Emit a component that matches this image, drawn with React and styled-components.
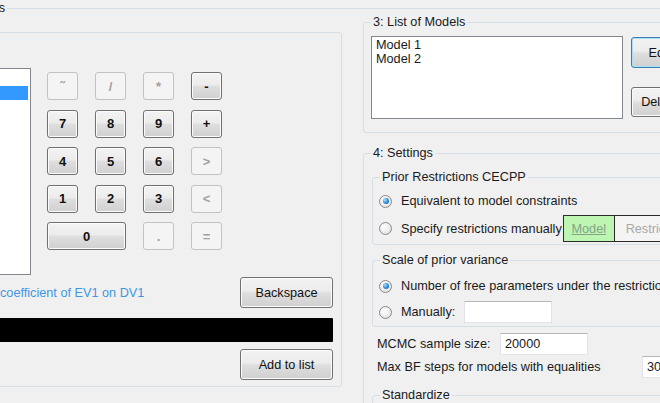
import styled, { createGlobalStyle } from "styled-components";

const GlobalStyle = createGlobalStyle`
  html, body {
    margin: 0;
    padding: 0;
    background: #f0f0f0;
  }
  body {
    font-family: "Liberation Sans", Arial, sans-serif;
  }
`;

const Screen = styled.div`
  width: 660px;
  height: 403px;
  overflow: hidden;
  background: #f0f0f0;
  font-family: "Liberation Sans", Arial, sans-serif;
  font-size: 12.7px;
  color: #1a1a1a;
  padding-top: 1px;
  box-sizing: border-box;
`;

const Group = styled.fieldset`
  margin: 0;
  padding: 0;
  min-width: 0;
  border: 1px solid #d5dfe5;
  border-radius: 3px;
`;

const Legend = styled.legend`
  margin-left: 7px;
  padding: 0 2px;
  line-height: 14px;
  font-size: 12.7px;
  color: #1a1a1a;
  white-space: nowrap;
`;

// title of the outer box; the window is cropped so only its tail shows
const FrameTitle = styled.span`
  display: inline-block;
  width: 105px;
  text-align: right;
`;

const Frame = styled(Group)`
  margin-left: -110px;
  width: 810px;
`;

const FrameBody = styled.div`
  display: flex;
  align-items: flex-start;
  gap: 21px;
  padding-left: 9px;
`;

/* ---------- left panel ---------- */

const Panel = styled.div`
  width: 442px;
  box-sizing: border-box;
  margin-top: 17px;
  border: 1px solid #d5dfe5;
  border-radius: 3px;
  padding: 35px 8px 6px 10px;
`;

const TopRow = styled.div`
  display: flex;
  align-items: flex-start;
`;

const ListBox = styled.div`
  width: ${(p) => p.$w}px;
  height: ${(p) => p.$h}px;
  box-sizing: border-box;
  flex: none;
  background: #fff;
  border: 1px solid #828790;
  padding: ${(p) => p.$pad || "3px 2px"};
  overflow: hidden;
`;

const Item = styled.div`
  height: 14px;
  line-height: 14px;
  white-space: nowrap;
  color: ${(p) => (p.$selected ? "#fff" : "#1a1a1a")};
  background: ${(p) => (p.$selected ? "#3399ff" : "transparent")};
`;

const Keypad = styled.div`
  display: grid;
  grid-template-columns: repeat(4, 31px);
  grid-auto-rows: 28px;
  column-gap: 17px;
  row-gap: 9.5px;
  margin: 4px 0 0 16px;
`;

const Btn = styled.button`
  font-family: inherit;
  font-size: 12.7px;
  color: #111;
  padding: 0;
  border: 1px solid #707070;
  border-radius: 3px;
  background: linear-gradient(#f3f3f3, #ececec 45%, #dedede 52%, #d0d0d0);
  box-shadow: inset 0 0 0 1px #fbfbfb;
  width: ${(p) => (p.$w ? `${p.$w}px` : "auto")};
  height: ${(p) => (p.$h ? `${p.$h}px` : "auto")};
  flex: none;
  &:disabled {
    border-color: #bfc3c6;
    background: #f4f4f4;
    color: #a0a0a0;
    box-shadow: none;
  }
`;

const Key = styled(Btn)`
  font-weight: 700;
  font-size: 13px;
  grid-column: span ${(p) => p.$span || 1};
`;

const DefaultBtn = styled(Btn)`
  border-color: #3c7fb1;
  box-shadow: inset 0 0 0 1px #a7e1f7;
`;

const HintRow = styled.div`
  display: flex;
  align-items: center;
  justify-content: space-between;
  margin-top: 2px;
`;

const Hint = styled.div`
  display: flex;
  white-space: nowrap;
  color: #3f97e3;
  padding-left: 89px;
`;

const FormulaBar = styled.div`
  height: 24px;
  margin-top: 10px;
  background: #000;
  border-radius: 1px;
`;

const AddRow = styled.div`
  display: flex;
  justify-content: flex-end;
  margin-top: 7px;
`;

/* ---------- right column ---------- */

const RightCol = styled.div`
  width: 330px;
  flex: none;
`;

const ListBody = styled.div`
  display: flex;
  gap: 8px;
  padding: 7px 0 13px 7px;
`;

const SideButtons = styled.div`
  display: flex;
  flex-direction: column;
  gap: 19px;
  padding-top: 1px;
`;

const Settings = styled(Group)`
  margin-top: 13px;
`;

const SettingsBody = styled.div`
  padding: 10px 0 0 8px;
`;

const SubGroup = styled(Group)`
  margin-top: ${(p) => p.$mt || 0}px;
`;

const SubBody = styled.div`
  padding: ${(p) => p.$pad};
`;

const RadioRow = styled.div`
  display: flex;
  align-items: center;
  white-space: nowrap;
  height: ${(p) => p.$h}px;
  margin-top: ${(p) => p.$mt || 0}px;
`;

const Radio = styled.span`
  width: 13px;
  height: 13px;
  box-sizing: border-box;
  flex: none;
  border-radius: 50%;
  border: 1px solid #8a8a8a;
  background: radial-gradient(circle at 40% 35%, #ffffff 0%, #ececec 55%, #d2d2d2 100%);
  display: flex;
  align-items: center;
  justify-content: center;
  margin-right: 9px;
  &::after {
    content: "";
    width: 6px;
    height: 6px;
    border-radius: 50%;
    background: ${(p) =>
      p.$on
        ? "radial-gradient(circle at 35% 35%, #a8e2ff 0%, #2a86d6 55%, #0c4f93 100%)"
        : "transparent"};
  }
`;

const ModelToggle = styled.div`
  display: flex;
  height: 27px;
  margin-left: 1px;
  border: 1px solid #2b2b2b;
  box-sizing: border-box;
`;

const ToggleSeg = styled.div`
  display: flex;
  align-items: center;
  justify-content: center;
  width: ${(p) => p.$w}px;
  background: ${(p) => (p.$active ? "#bdf5b3" : "#f4f4f4")};
  color: ${(p) => (p.$active ? "#86a386" : "#a8a8a8")};
  text-decoration: ${(p) => (p.$active ? "underline" : "none")};
  border-left: ${(p) => (p.$active ? "none" : "1px solid #2b2b2b")};
`;

const Label = styled.span`
  display: inline-block;
  width: ${(p) => p.$w}px;
  white-space: nowrap;
`;

const TextBox = styled.div`
  width: ${(p) => p.$w}px;
  height: 22px;
  box-sizing: border-box;
  background: #fff;
  border: 1px solid #e2e3ea;
  border-top-color: #b5b7bd;
  padding: 0 4px;
  line-height: 20px;
  flex: none;
`;

const FieldRow = styled.div`
  display: flex;
  align-items: center;
  height: 22px;
  margin: ${(p) => p.$mt}px 0 0 5px;
`;

const keys = [
  { k: "˜", off: true },
  { k: "/", off: true },
  { k: "*", off: true },
  { k: "-" },
  { k: "7" },
  { k: "8" },
  { k: "9" },
  { k: "+" },
  { k: "4" },
  { k: "5" },
  { k: "6" },
  { k: ">", off: true },
  { k: "1" },
  { k: "2" },
  { k: "3" },
  { k: "<", off: true },
  { k: "0", span: 2 },
  { k: ".", off: true },
  { k: "=", off: true },
];

export default function App() {
  return (
    <Screen>
      <GlobalStyle />
      <Frame>
        <Legend>
          <FrameTitle>2: Specify Models</FrameTitle>
        </Legend>
        <FrameBody>
          <Panel>
            <TopRow>
              <ListBox $w={120} $h={207}>
                <Item />
                <Item $selected />
              </ListBox>
              <Keypad>
                {keys.map((b, i) => (
                  <Key key={i} disabled={b.off} $span={b.span}>
                    {b.k}
                  </Key>
                ))}
              </Keypad>
            </TopRow>
            <HintRow>
              <Hint>coefficient of EV1 on DV1</Hint>
              <Btn $w={93} $h={31}>Backspace</Btn>
            </HintRow>
            <FormulaBar />
            <AddRow>
              <Btn $w={93} $h={31}>Add to list</Btn>
            </AddRow>
          </Panel>

          <RightCol>
            <Group>
              <Legend>3: List of Models</Legend>
              <ListBody>
                <ListBox $w={252} $h={83} $pad="1px 4px">
                  <Item>Model 1</Item>
                  <Item>Model 2</Item>
                </ListBox>
                <SideButtons>
                  <DefaultBtn $w={57} $h={31}>Edit</DefaultBtn>
                  <Btn $w={57} $h={30}>Delete</Btn>
                </SideButtons>
              </ListBody>
            </Group>

            <Settings>
              <Legend>4: Settings</Legend>
              <SettingsBody>
                <SubGroup>
                  <Legend>Prior Restrictions CECPP</Legend>
                  <SubBody $pad="7px 0 2px 6px">
                    <RadioRow $h={20}>
                      <Radio $on />
                      Equivalent to model constraints
                    </RadioRow>
                    <RadioRow $h={27} $mt={4}>
                      <Radio />
                      Specify restrictions manually
                      <ModelToggle>
                        <ToggleSeg $active $w={50}>Model</ToggleSeg>
                        <ToggleSeg $w={88}>Restrictions</ToggleSeg>
                      </ModelToggle>
                    </RadioRow>
                  </SubBody>
                </SubGroup>

                <SubGroup $mt={8}>
                  <Legend>Scale of prior variance</Legend>
                  <SubBody $pad="9px 0 3px 6px">
                    <RadioRow $h={20}>
                      <Radio $on />
                      Number of free parameters under the restriction(s)
                    </RadioRow>
                    <RadioRow $h={22} $mt={5}>
                      <Radio />
                      <Label $w={63}>Manually:</Label>
                      <TextBox $w={88} />
                    </RadioRow>
                  </SubBody>
                </SubGroup>

                <FieldRow $mt={6}>
                  <Label $w={123}>MCMC sample size:</Label>
                  <TextBox $w={88}>20000</TextBox>
                </FieldRow>
                <FieldRow $mt={1}>
                  <Label $w={265}>Max BF steps for models with equalities</Label>
                  <TextBox $w={40}>30</TextBox>
                </FieldRow>

                <SubGroup $mt={10}>
                  <Legend>Standardize</Legend>
                  <SubBody $pad="30px 0 0 6px" />
                </SubGroup>
              </SettingsBody>
            </Settings>
          </RightCol>
        </FrameBody>
      </Frame>
    </Screen>
  );
}
